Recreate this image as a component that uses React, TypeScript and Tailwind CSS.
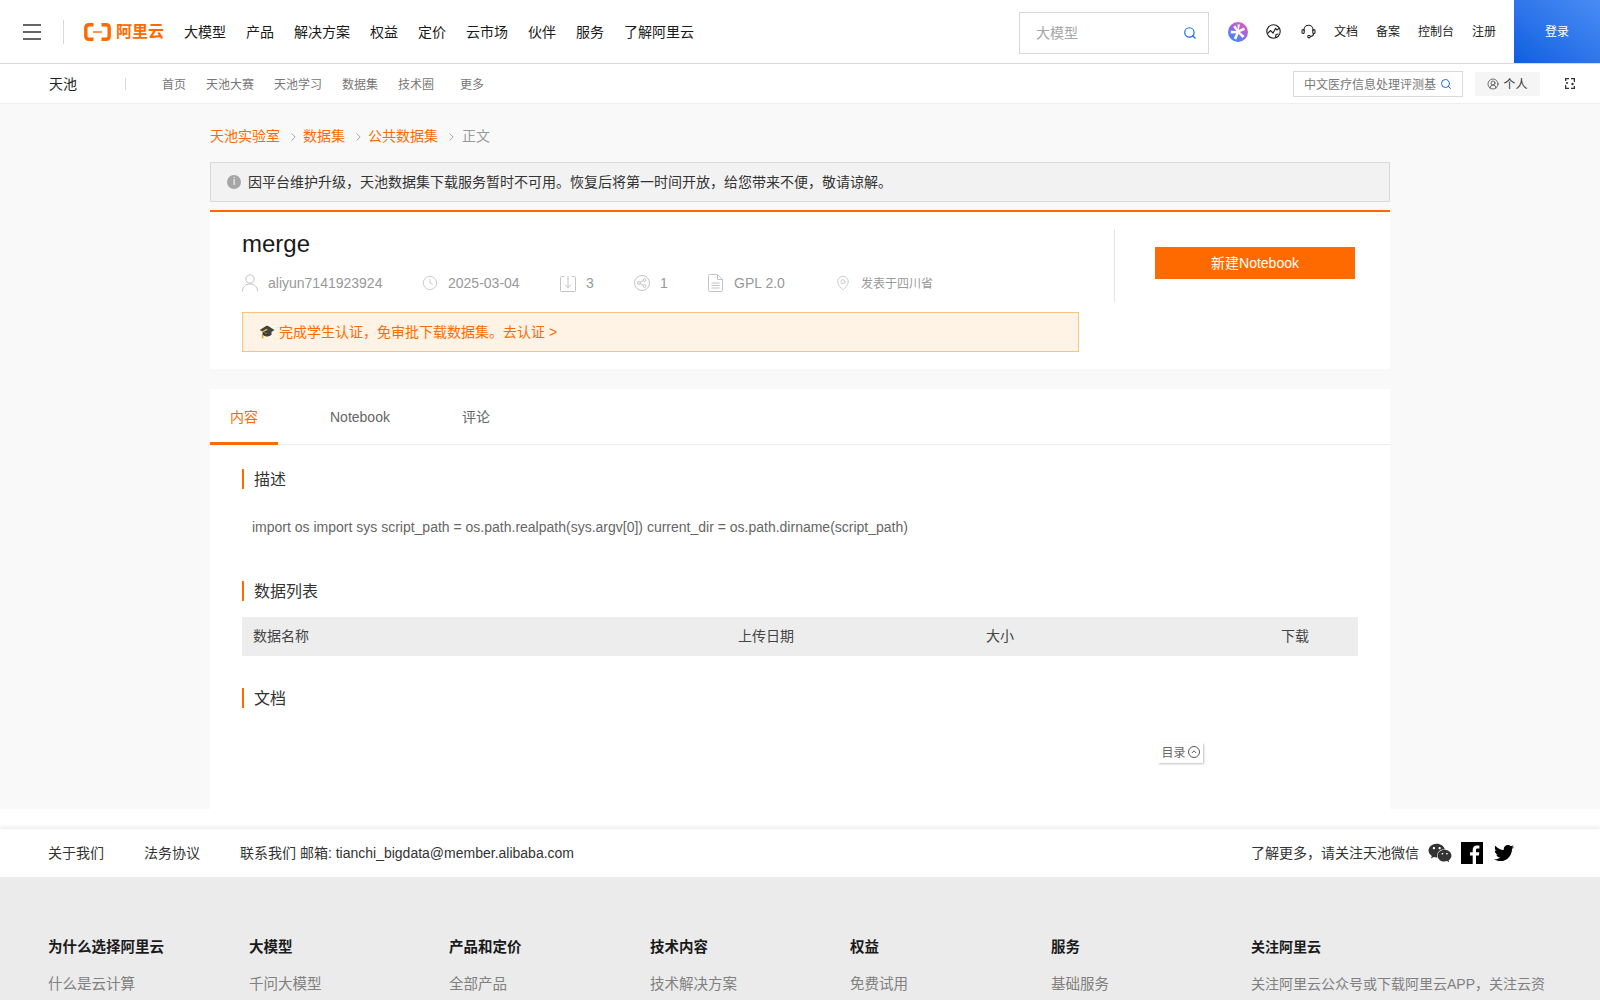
import React from 'react';
import { Search, ChevronRight, Clock, MapPin, CircleUserRound } from 'lucide-react';
import { FaWeixin, FaTwitter } from 'react-icons/fa';

const NAV = [
  { label: '大模型', ml: '' },
  { label: '产品', ml: 'ml-5' },
  { label: '解决方案', ml: 'ml-5' },
  { label: '权益', ml: 'ml-5' },
  { label: '定价', ml: 'ml-5' },
  { label: '云市场', ml: 'ml-5' },
  { label: '伙伴', ml: 'ml-5' },
  { label: '服务', ml: 'ml-5' },
  { label: '了解阿里云', ml: 'ml-5' },
];

const SUB_NAV = [
  { label: '首页', cls: 'w-[44px]' },
  { label: '天池大赛', cls: 'w-[68px]' },
  { label: '天池学习', cls: 'w-[68px]' },
  { label: '数据集', cls: 'w-[56px]' },
  { label: '技术圈', cls: 'w-[62px]' },
  { label: '更多', cls: 'w-[40px]' },
];

const FOOTER_COLS = [
  { title: '为什么选择阿里云', link: '什么是云计算', size: 'text-[14.5px]' },
  { title: '大模型', link: '千问大模型', size: 'text-[14.5px]' },
  { title: '产品和定价', link: '全部产品', size: 'text-[14.5px]' },
  { title: '技术内容', link: '技术解决方案', size: 'text-[14.5px]' },
  { title: '权益', link: '免费试用', size: 'text-[14.5px]' },
  { title: '服务', link: '基础服务', size: 'text-[14.5px]' },
  { title: '关注阿里云', link: '关注阿里云公众号或下载阿里云APP，关注云资', size: 'text-sm' },
];

const Logo = () => (
  <svg width="27" height="18" viewBox="0 0 27 18" fill="none">
    <path d="M9.500 1.700H5Q1.800 1.700 1.800 5V13Q1.800 16.300 5 16.300H9.500" stroke="#ff6a00" strokeWidth="3.400" />
    <path d="M17.500 1.700H22Q25.200 1.700 25.200 5V13Q25.200 16.300 22 16.300H17.500" stroke="#ff6a00" strokeWidth="3.400" />
    <rect x="9" y="8.300" width="9" height="1.400" fill="#ff6a00" />
  </svg>
);

const StarBadge = () => (
  <svg width="20" height="20" viewBox="0 0 20 20">
    <defs>
      <linearGradient id="badge" x1="0.85" y1="0.1" x2="0.25" y2="1">
        <stop offset="0" stopColor="#e05cb8" />
        <stop offset="0.5" stopColor="#8f6be8" />
        <stop offset="1" stopColor="#2f8ef7" />
      </linearGradient>
    </defs>
    <circle cx="10" cy="10" r="10" fill="url(#badge)" />
    <path d="M12 2.500 10.700 7.900 16 5.500 17 8 12 10 16.500 14 14.500 16 10.500 11.800 8.300 17.500 5.800 16.500 8.200 11.200 2.800 11.500 2.800 8.800 8.500 8.900 5.200 5 7.300 3.500 9.800 7.500 9.400 2.500Z" fill="#fff" />
  </svg>
);

const GlobeIcon = () => (
  <svg width="15" height="15" viewBox="0 0 15 15" fill="none" stroke="#222" strokeWidth="1.100">
    <circle cx="7.500" cy="7.500" r="6.700" />
    <path d="M1.500 9.500 4.500 6.500 7 9 9.500 4.500 11 6 13.500 3.800" />
    <path d="M9.500 13.500 10 10.500 12.500 10" />
  </svg>
);

const HeadsetIcon = () => (
  <svg width="15" height="15" viewBox="0 0 15 15" fill="none" stroke="#222" strokeWidth="1.100">
    <path d="M3 7V5.800a4.500 4.500 0 0 1 9 0V7" />
    <rect x="1" y="5.500" width="2.200" height="4" rx="1" />
    <rect x="11.800" y="5.500" width="2.200" height="4" rx="1" />
    <path d="M12.600 9.500c0 1.800-1.300 2.800-3.200 3" />
    <circle cx="8" cy="12.600" r="1.300" />
  </svg>
);

const SwitchIcon = () => (
  <svg width="10" height="11" viewBox="0 0 10 11" fill="#333" stroke="none">
    <path d="M0 0h4v1.200H1.300V3H0z" />
    <path d="M6 0h4v4.500L8.700 3.300V1.200H6z" />
    <path d="M0 6.500 1.300 7.700V9.800H4V11H0z" />
    <path d="M6 9.800h2.700V8H10v3H6z" />
    <circle cx="2" cy="5" r="1" />
    <circle cx="7.500" cy="6" r="1.200" />
  </svg>
);

const UserIcon = () => (
  <svg width="16" height="18" viewBox="0 0 16 18" fill="none" stroke="#c4c4c4">
    <circle cx="8" cy="5" r="4.200" />
    <path d="M.5 17.500c0-4.500 3-7.500 7.500-7.500s7.500 3 7.500 7.500" />
  </svg>
);

const FileIcon = () => (
  <svg width="15" height="18" viewBox="0 0 15 18" fill="none" stroke="#c4c4c4">
    <path d="M.5 1.500a1 1 0 0 1 1-1h8l5 5v11a1 1 0 0 1-1 1h-12a1 1 0 0 1-1-1z" />
    <path d="M9.500.5v5h5M3.500 9h8M3.500 11.500h8M3.500 14h8" />
  </svg>
);

const DownloadIcon = () => (
  <svg width="16" height="17" viewBox="0 0 16 17" fill="none" stroke="#c4c4c4">
    <path d="M4.500 1.500H1.500a1 1 0 0 0-1 1v13a1 1 0 0 0 1 1h13a1 1 0 0 0 1-1v-13a1 1 0 0 0-1-1h-3" />
    <path d="M8 1v11.500M4.800 9.500 8 12.800l3.200-3.300" />
  </svg>
);

const ShareIcon = () => (
  <svg width="16" height="16" viewBox="0 0 16 16" fill="none" stroke="#c4c4c4">
    <circle cx="8" cy="8" r="7.500" />
    <circle cx="5" cy="8" r="1.400" />
    <circle cx="10.600" cy="5" r="1.400" />
    <circle cx="10.600" cy="11" r="1.400" />
    <path d="M6.200 7.300 9.400 5.700M6.200 8.700l3.200 1.600" />
  </svg>
);

const FacebookIcon = () => (
  <svg width="22" height="22" viewBox="0 0 22 22">
    <rect width="22" height="22" fill="#000" />
    <path d="M15 22v-8.500h2.900l.4-3.300H15V8.100c0-1 .3-1.600 1.700-1.600h1.700V3.600c-.3 0-1.300-.1-2.500-.1-2.500 0-4.200 1.500-4.200 4.300v2.400H9v3.300h2.700V22z" fill="#fff" />
  </svg>
);

const SectionTitle: React.FC<{ title: string; className?: string }> = ({ title, className }) => (
  <div className={`h-5 border-l-2 border-[#ff6a00] pl-[10px] text-base leading-[21px] text-[#333] ${className ?? ''}`}>{title}</div>
);

const App: React.FC = () => {
  return (
    <div className="h-screen w-full overflow-hidden bg-white font-['Liberation_Sans','Noto_Sans_CJK_SC',sans-serif]">
      {/* top bar */}
      <header className="flex h-16 items-center border-b border-[#d9d9d9]">
        <div className="ml-[23px] flex h-4 w-[18px] flex-col justify-between">
          <span className="h-0.5 bg-[#666]" />
          <span className="h-0.5 bg-[#666]" />
          <span className="h-0.5 bg-[#666]" />
        </div>
        <div className="ml-[22px] h-6 w-px bg-[#d9d9d9]" />
        <div className="ml-5 flex items-center">
          <Logo />
          <span className="ml-[5px] text-base font-bold leading-[18px] text-[#ff6a00]">阿里云</span>
        </div>
        <nav className="ml-5 flex text-sm text-[#1a1a1a]">
          {NAV.map((n) => (
            <a key={n.label} className={n.ml}>{n.label}</a>
          ))}
        </nav>
        <div className="ml-auto flex h-full items-center">
          <div className="mt-[2px] flex h-[42px] w-[190px] items-center justify-between border border-[#d9d9d9] pl-4 pr-[11px] text-sm text-[#a6a6a6]">
            <span>大模型</span>
            <Search size={14} className="text-[#1768e6]" />
          </div>
          <div className="ml-[19px]"><StarBadge /></div>
          <div className="ml-[18px]"><GlobeIcon /></div>
          <div className="ml-5"><HeadsetIcon /></div>
          <div className="ml-[18px] flex gap-[18px] text-xs text-[#222]">
            <span>文档</span>
            <span>备案</span>
            <span>控制台</span>
            <span>注册</span>
          </div>
          <button className="ml-[18px] h-full w-[86px] bg-gradient-to-tr from-[#0a5fe0] to-[#4a8cf5] text-xs text-white">登录</button>
        </div>
      </header>

      {/* tianchi bar */}
      <div className="flex h-10 items-center border-b border-[#eeeeee]">
        <span className="ml-[49px] w-[76px] text-sm text-[#222]">天池</span>
        <span className="h-3 w-px bg-[#d9d9d9]" />
        <nav className="ml-9 flex pt-[2px] text-xs text-[#777]">
          {SUB_NAV.map((n) => (
            <a key={n.label} className={n.cls}>{n.label}</a>
          ))}
        </nav>
        <div className="ml-auto flex items-center">
          <div className="flex h-[26px] w-[170px] items-center gap-1 border border-[#d9d9d9] pl-[10px] text-xs text-[#777]">
            <span className="w-[132px] overflow-hidden whitespace-nowrap pt-[2px]">中文医疗信息处理评测基</span>
            <Search size={12} className="text-[#1768e6]" />
          </div>
          <div className="ml-3 flex h-6 w-[65px] items-center justify-center gap-1 bg-[#f5f5f5] text-xs text-[#333]">
            <CircleUserRound size={12} strokeWidth={1.400} />
            <span className="pt-[2px]">个人</span>
          </div>
          <div className="ml-[25px] mr-[25px]"><SwitchIcon /></div>
        </div>
      </div>

      {/* main */}
      <main className="h-[705px] bg-[#f9f9f9]">
        <div className="mx-auto h-full w-[1180px]">
          <div className="flex h-[58px] items-start pt-[22px] text-sm leading-5 text-[#ff6a00]">
            <span>天池实验室</span>
            <ChevronRight size={14} strokeWidth={1.200} className="ml-[7px] mr-[3px] mt-[4px] w-[13px] text-[#777]" />
            <span>数据集</span>
            <ChevronRight size={14} strokeWidth={1.200} className="ml-[7px] mr-[3px] mt-[4px] w-[13px] text-[#777]" />
            <span>公共数据集</span>
            <ChevronRight size={14} strokeWidth={1.200} className="ml-[7px] mr-1 mt-[4px] w-[13px] text-[#777]" />
            <span className="text-[#999]">正文</span>
          </div>

          <div className="flex h-10 items-center border border-[#d9d9d9] bg-[#f2f2f2] pl-[16px] text-sm text-[#333]">
            <span className="flex h-[14px] w-[14px] items-center justify-center rounded-full bg-[#a6a6a6] text-[10px] text-white">i</span>
            <span className="ml-[7px]">因平台维护升级，天池数据集下载服务暂时不可用。恢复后将第一时间开放，给您带来不便，敬请谅解。</span>
          </div>

          <section className="mt-2 flex h-[159px] items-start border-t-2 border-[#ff6a00] bg-white">
            <div className="w-[904px] pl-8 pt-4">
              <h1 className="text-2xl leading-8 text-[#1a1a1a]">merge</h1>
              <div className="mt-[13px] flex h-5 items-center text-sm text-[#999]">
                <UserIcon />
                <span className="ml-[10px] w-[154px]">aliyun7141923924</span>
                <Clock size={16} strokeWidth={1} className="text-[#b5b5b5]" />
                <span className="ml-[10px] w-[112px]">2025-03-04</span>
                <DownloadIcon />
                <span className="ml-[10px] w-[48px]">3</span>
                <ShareIcon />
                <span className="ml-[10px] w-[48px]">1</span>
                <FileIcon />
                <span className="ml-[11px] w-[101px]">GPL 2.0</span>
                <MapPin size={16} strokeWidth={1} className="text-[#b5b5b5]" />
                <span className="ml-[10px] pt-[2px] text-xs">发表于四川省</span>
              </div>
              <div className="mt-[19px] flex h-10 w-[837px] items-center border border-[#ffc27f] bg-[#fff3e6] pl-4 text-sm text-[#ff6a00]">
                <span className="text-[13px]">🎓</span>
                <span className="ml-1">完成学生认证，免审批下载数据集。去认证 &gt;</span>
              </div>
            </div>
            <div className="mt-[17px] h-[73px] w-px bg-[#e5e5e5]" />
            <button className="ml-10 mt-[35px] h-8 w-[200px] bg-[#ff6a00] text-sm text-white">新建Notebook</button>
          </section>

          <section className="relative mt-5 h-[420px] bg-white">
            <div className="flex h-14 items-stretch border-b border-[#eeeeee] text-sm text-[#666]">
              <a className="-mb-px flex items-center border-b-[3px] border-[#ff6a00] px-5 pt-[3px] text-[#ff6a00]">内容</a>
              <a className="ml-8 flex items-center px-5">Notebook</a>
              <a className="ml-8 flex items-center px-5">评论</a>
            </div>
            <div className="px-8 pt-6">
              <SectionTitle title="描述" />
              <p className="ml-[10px] mt-7 text-sm leading-5 text-[#666]">
                import os import sys script_path = os.path.realpath(sys.argv[0]) current_dir = os.path.dirname(script_path)
              </p>
              <SectionTitle title="数据列表" className="mt-11" />
              <div className="mt-4 grid h-[39px] grid-cols-[496px_248px_295px_1fr] items-center bg-[#ededed] pb-[2px] text-sm text-[#444]">
                <span className="pl-[11px]">数据名称</span>
                <span>上传日期</span>
                <span>大小</span>
                <span>下载</span>
              </div>
              <SectionTitle title="文档" className="mt-8" />
            </div>
            <div className="absolute left-[948px] top-[354px] flex h-5 w-[45px] items-center justify-center gap-[2px] bg-white text-xs text-[#666] shadow-[1px_1px_2px_rgba(0,0,0,0.25)]">
              <span>目录</span>
              <svg width="12" height="12" viewBox="0 0 12 12" fill="none" stroke="#555" className="-mt-[2px]">
                <circle cx="6" cy="6" r="5.500" />
                <path d="M3.800 7 6 4.800 8.200 7" />
              </svg>
            </div>
          </section>
        </div>
      </main>

      {/* footer */}
      <div className="mt-5 flex h-12 items-center bg-white px-12 text-sm text-[#333] shadow-[0_-2px_4px_rgba(0,0,0,0.08)]">
        <a>关于我们</a>
        <a className="ml-10">法务协议</a>
        <span className="ml-10">联系我们 邮箱: tianchi_bigdata@member.alibaba.com</span>
        <div className="ml-auto flex items-center pr-[38px]">
          <span>了解更多，请关注天池微信</span>
          <FaWeixin size={24} className="ml-[9px] text-[#333]" />
          <div className="ml-[9px]"><FacebookIcon /></div>
          <FaTwitter size={20} className="ml-[11px] text-black" />
        </div>
      </div>
      <footer className="grid h-[123px] grid-cols-[201px_200px_201px_200px_201px_200px_320px] bg-[#ebebeb] pl-12 pt-[60px] leading-5">
        {FOOTER_COLS.map((c) => (
          <div key={c.title} className={c.size}>
            <div className="font-bold text-[#1a1a1a]">{c.title}</div>
            <div className="mt-[17px] whitespace-nowrap text-[#808080]">{c.link}</div>
          </div>
        ))}
      </footer>
    </div>
  );
};

export default App;
